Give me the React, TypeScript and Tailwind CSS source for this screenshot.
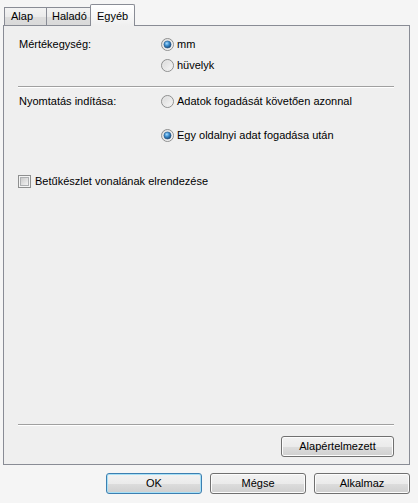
import React from 'react';

const Radio = ({ checked }: { checked?: boolean }) => (
  <svg width="13" height="13" viewBox="0 0 13 13" className="shrink-0">
    <defs>
      <linearGradient id="rbg" x1="0" y1="0" x2="1" y2="1">
        <stop offset="0" stopColor="#d6d6d6" />
        <stop offset="1" stopColor="#fbfbfb" />
      </linearGradient>
      <radialGradient id="rdot" cx="0.4" cy="0.35" r="0.7">
        <stop offset="0" stopColor="#a9dcff" />
        <stop offset="0.45" stopColor="#3d8fd0" />
        <stop offset="1" stopColor="#163f6c" />
      </radialGradient>
    </defs>
    <circle cx="6.5" cy="6.5" r="6" fill="url(#rbg)" stroke="#8e8f8f" strokeWidth="1" />
    <circle cx="6.5" cy="6.5" r="4.6" fill="none" stroke="#e9e9e9" strokeWidth="0.8" />
    {checked && <circle cx="6.5" cy="6.5" r="3.6" fill="url(#rdot)" stroke="#1f4e7e" strokeWidth="0.5" />}
  </svg>
);

const Checkbox = () => (
  <span className="w-[13px] h-[13px] shrink-0 border border-[#8e8f8f] bg-[#f4f4f4] p-[1px] flex">
    <span className="flex-1 border border-[#aeb0b2] bg-gradient-to-br from-[#cbcbcb] to-[#f3f3f3]" />
  </span>
);

const Button = ({ label, primary, className = '' }: { label: string; primary?: boolean; className?: string }) => (
  <button
    className={`h-[21px] rounded-[3px] border text-[11px] text-black leading-none flex items-center justify-center ${
      primary
        ? 'border-[#3c7fb1] shadow-[inset_0_0_0_1px_#a8e0f6]'
        : 'border-[#707070] shadow-[inset_0_0_0_1px_#fcfcfc]'
    } bg-[linear-gradient(to_bottom,#f2f2f2_0%,#ebebeb_50%,#dddddd_51%,#cfcfcf_100%)] ${className}`}
  >
    {label}
  </button>
);

const Tab = ({ label }: { label: string }) => (
  <div className="h-[22px] px-[6px] relative z-10 -ml-px border border-b-0 border-[#898c95] rounded-t-[2px] bg-[linear-gradient(to_bottom,#ffffff,#f6f6f6_60%,#efefef)] flex items-start pt-[3px]">
    {label}
  </div>
);

export default function App() {
  return (
    <div
      className="w-[418px] h-[503px] bg-[#f5f5f5] pt-[4px] pl-[3px] pr-[8px] flex flex-col text-black text-[11px]"
      style={{ fontFamily: '"Liberation Sans", Arial, sans-serif' }}
    >
      {/* Tabs */}
      <div className="flex items-end pl-[1px] -mb-px">
        <div className="w-[43px] h-[18px] mb-px pl-[6px] border border-b-0 border-[#898c95] bg-[linear-gradient(to_bottom,#f3f3f3,#ebebeb_50%,#dddddd_51%,#d9d9d9)] flex items-center">
          Alap
        </div>
        <div className="w-[45px] h-[18px] mb-px pl-[5px] -ml-px border border-b-0 border-[#898c95] bg-[linear-gradient(to_bottom,#f3f3f3,#ebebeb_50%,#dddddd_51%,#d9d9d9)] flex items-center">
          Haladó
        </div>
        <Tab label="Egyéb" />
      </div>

      {/* Panel */}
      <div className="h-[440px] border border-[#898c95] bg-[#efefef] flex flex-col pl-[14px] pr-[15px] pt-[10px] pb-[7px]">
        <div className="flex items-center h-[16px]">
          <span className="w-[143px] pl-[1px]">Mértékegység:</span>
          <Radio checked />
          <span className="ml-[3px]">mm</span>
        </div>
        <div className="flex items-center h-[16px] mt-[5px] pl-[143px]">
          <Radio />
          <span className="ml-[3px]">hüvelyk</span>
        </div>

        <div className="mt-[13px] border-t border-[#a0a0a0] border-b border-b-white" />

        <div className="flex items-center h-[16px] mt-[5px]">
          <span className="w-[143px] pl-[1px]">Nyomtatás indítása:</span>
          <Radio />
          <span className="ml-[3px]">Adatok fogadását követően azonnal</span>
        </div>
        <div className="flex items-center h-[16px] mt-[18px] pl-[143px]">
          <Radio checked />
          <span className="ml-[3px]">Egy oldalnyi adat fogadása után</span>
        </div>

        <div className="flex items-center h-[16px] mt-[30px]">
          <Checkbox />
          <span className="ml-[4px]">Betűkészlet vonalának elrendezése</span>
        </div>

        <div className="flex-1" />

        <div className="border-t border-[#a0a0a0] border-b border-b-white" />
        <div className="flex justify-end mt-[10px]">
          <Button label="Alapértelmezett" className="w-[113px]" />
        </div>
      </div>

      {/* Dialog buttons */}
      <div className="flex justify-end gap-[8px] mt-[8px]">
        <Button label="OK" primary className="w-[96px]" />
        <Button label="Mégse" className="w-[96px]" />
        <Button label="Alkalmaz" className="w-[96px]" />
      </div>
    </div>
  );
}
